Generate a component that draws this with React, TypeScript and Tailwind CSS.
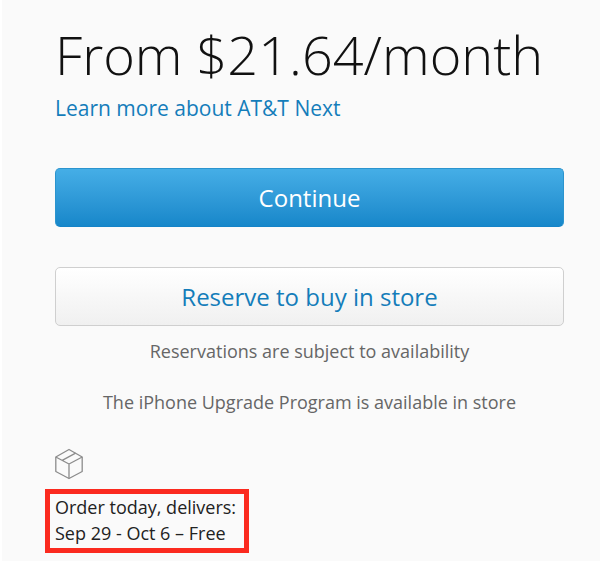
function BoxIcon() {
  return (
    <svg
      className="h-8 w-7"
      viewBox="0 0 28 32"
      fill="none"
      stroke="#8c8c8c"
      strokeWidth="1.3"
      strokeLinejoin="round"
      aria-hidden="true"
    >
      <path d="M14 1.5 27.2 9v14.5L14 30.5.8 23.5V9L14 1.5Z" />
      <path d="M.8 9 14 16 27.2 9M14 16v14.5M7.2 12.4 20.6 5.1" />
    </svg>
  );
}

export default function App() {
  return (
    <div className="min-h-screen border-l-2 border-white bg-[#fafafa] font-['Open_Sans','Noto_Sans',sans-serif]">
      <main className="flex flex-col pr-9 pl-[53px] pt-4">
        <h1 className="text-[54px] leading-[76px] font-light whitespace-nowrap text-[#111]">
          From $21.64/month
        </h1>
        <a href="#att-next" className="self-start text-[21px] leading-8 text-[#147dba]">
          Learn more about AT&amp;T Next
        </a>

        <button
          type="button"
          className="mt-11 h-[59px] cursor-pointer rounded-[5px] border border-[#2b94ce] border-b-[#1483c7] bg-linear-to-b from-[#45aee6] to-[#1687ca] text-2xl text-white"
        >
          Continue
        </button>
        <button
          type="button"
          className="mt-10 h-[59px] cursor-pointer rounded-[5px] border border-[#cfcfcf] bg-linear-to-b from-white to-[#f0f0f0] text-2xl text-[#147dba]"
        >
          Reserve to buy in store
        </button>

        <p className="mt-3 text-center text-lg leading-[26px] text-[#666]">
          Reservations are subject to availability
        </p>
        <p className="mt-[25px] text-center text-lg leading-[26px] text-[#666]">
          The iPhone Upgrade Program is available in store
        </p>

        <div className="mt-[33px]">
          <BoxIcon />
        </div>
        <p className="mt-[9px] -ml-[10px] self-start border-[5px] border-[#fb2a1f] pr-2 pb-0.5 pl-[5px] text-lg leading-[26px] whitespace-nowrap text-[#222]">
          Order today, delivers:
          <br />
          Sep 29 - Oct 6 – Free
        </p>
      </main>
    </div>
  );
}
